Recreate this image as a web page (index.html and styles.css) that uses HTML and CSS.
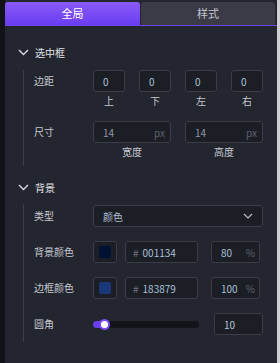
FILE: index.html
```html
<!DOCTYPE html>
<html lang="zh-CN">
<head>
    <meta charset="UTF-8">
    <title>属性面板</title>
    <link rel="stylesheet" href="styles.css">
</head>
<body>
    <div class="edge-left"></div>
    <div class="panel">
        <div class="tabs">
            <div class="tab active">全局</div>
            <div class="tab">样式</div>
        </div>

        <div class="section section-frame">
            <div class="section-head">
                <svg class="chevron" width="11" height="7" viewBox="0 0 11 7"><path d="M1 1l4.5 4.5L10 1" fill="none" stroke="#d8dae2" stroke-width="1.4"/></svg>
                <span>选中框</span>
            </div>
            <div class="section-body first">
                <div class="row row-top">
                    <div class="label">边距</div>
                    <div class="quad">
                        <div class="cell"><div class="box num">0</div><div class="cap">上</div></div>
                        <div class="cell"><div class="box num">0</div><div class="cap">下</div></div>
                        <div class="cell"><div class="box num">0</div><div class="cap">左</div></div>
                        <div class="cell"><div class="box num">0</div><div class="cap">右</div></div>
                    </div>
                </div>
                <div class="row row-top">
                    <div class="label">尺寸</div>
                    <div class="pair">
                        <div class="cell"><div class="box size"><span class="dim">14</span><span class="unit">px</span></div><div class="cap">宽度</div></div>
                        <div class="cell"><div class="box size"><span class="dim">14</span><span class="unit">px</span></div><div class="cap">高度</div></div>
                    </div>
                </div>
            </div>
        </div>

        <div class="section section-bg">
            <div class="section-head">
                <svg class="chevron" width="11" height="7" viewBox="0 0 11 7"><path d="M1 1l4.5 4.5L10 1" fill="none" stroke="#d8dae2" stroke-width="1.4"/></svg>
                <span>背景</span>
            </div>
            <div class="section-body second">
                <div class="row">
                    <div class="label">类型</div>
                    <div class="box select">
                        <span>颜色</span>
                        <svg width="10" height="6" viewBox="0 0 10 6"><path d="M1 1l4 4 4-4" fill="none" stroke="#b8bac4" stroke-width="1.2"/></svg>
                    </div>
                </div>
                <div class="row">
                    <div class="label">背景颜色</div>
                    <div class="color-line">
                        <div class="box swatch"><div class="chip chip-bg"></div></div>
                        <div class="box hex"><span class="hash">#</span><span>001134</span></div>
                        <div class="box pct"><span>80</span><span class="unit">%</span></div>
                    </div>
                </div>
                <div class="row">
                    <div class="label">边框颜色</div>
                    <div class="color-line">
                        <div class="box swatch"><div class="chip chip-border"></div></div>
                        <div class="box hex"><span class="hash">#</span><span>183879</span></div>
                        <div class="box pct"><span>100</span><span class="unit">%</span></div>
                    </div>
                </div>
                <div class="row">
                    <div class="label">圆角</div>
                    <div class="slider-line">
                        <div class="track">
                            <div class="fill" style="width: 11px"></div>
                            <div class="thumb"></div>
                        </div>
                        <div class="box radius">10</div>
                    </div>
                </div>
            </div>
        </div>
    </div>
    <div class="edge-right"></div>
</body>
</html>
```

FILE: styles.css
```css
body {
    margin: 0;
    display: flex;
    width: 280px;
    height: 363px;
    overflow: hidden;
    background: #23252f;
    font-family: "Noto Sans CJK SC", "Noto Sans", sans-serif;
    font-size: 10px;
    color: #c6c8d0;
}
.edge-left {
    width: 5px;
    background: #121318;
}
.edge-right {
    width: 3px;
    background: #cfd0d3;
}
.panel {
    width: 272px;
    background: #23252f;
}
.tabs {
    display: flex;
    gap: 1px;
    margin-top: 2px;
    padding-right: 2px;
    border-bottom: 1px solid #7046f4;
}
.tab {
    flex: 1;
    height: 23px;
    line-height: 23px;
    text-align: center;
    font-size: 11px;
    background: #3a3b47;
    color: #c2c4cc;
    border-radius: 3px 3px 0 0;
}
.tab.active {
    flex: 0 0 135px;
    background: linear-gradient(#8b5cf6, #6a3cf2);
    color: #ffffff;
}
.section-head {
    display: flex;
    align-items: center;
    height: 20px;
    padding-left: 13px;
    color: #e2e4ea;
    font-size: 10px;
}
.section-head span {
    margin-left: 6px;
}
.section-frame .section-head {
    margin-top: 16px;
}
.section-bg .section-head {
    margin-top: 11px;
}
.section-body {
    margin-left: 18px;
    border-left: 1px solid #3b3d48;
    padding-left: 10px;
    display: flex;
    flex-direction: column;
}
.section-body.first {
    margin-top: 8px;
    gap: 14px;
    padding-bottom: 8px;
}
.section-body.second {
    margin-top: 7px;
    gap: 14px;
    padding-bottom: 7px;
    padding-top: 1px;
}
.row {
    display: flex;
    align-items: center;
}
.row-top {
    align-items: flex-start;
}
.label {
    width: 59px;
    flex: none;
    line-height: 22px;
    color: #c6c8d0;
}
.box {
    box-sizing: border-box;
    height: 22px;
    border: 1px solid #3a3c47;
    border-radius: 3px;
    background: #1c1e26;
    display: flex;
    align-items: center;
    color: #a9c0d8;
}
.quad, .pair {
    display: flex;
    gap: 14px;
}
.cell {
    display: flex;
    flex-direction: column;
    align-items: center;
}
.cap {
    margin-top: 3px;
    line-height: 12px;
    color: #c6c8d0;
}
.num {
    width: 32px;
    padding-left: 9px;
}
.size {
    width: 78px;
    padding: 0 5px 0 9px;
    justify-content: space-between;
}
.dim {
    color: #8d99ab;
}
.unit {
    color: #5e616e;
}
.select {
    width: 170px;
    padding: 0 9px 0 9px;
    justify-content: space-between;
    color: #aebfd2;
}
.color-line {
    display: flex;
}
.swatch {
    width: 24px;
    justify-content: center;
}
.chip {
    width: 12px;
    height: 12px;
    border-radius: 2px;
}
.chip-bg {
    background: #001134;
}
.chip-border {
    background: #183879;
}
.hex {
    width: 73px;
    margin-left: 8px;
    padding-left: 7px;
    gap: 4px;
}
.hash {
    color: #6d7080;
}
.pct {
    width: 49px;
    margin-left: 13px;
    padding: 0 4px 0 9px;
    justify-content: space-between;
}
.slider-line {
    display: flex;
    align-items: center;
}
.track {
    position: relative;
    width: 106px;
    height: 7px;
    border-radius: 4px;
    background: #131419;
}
.fill {
    height: 7px;
    border-radius: 4px 0 0 4px;
    background: #6a3cf2;
}
.thumb {
    position: absolute;
    left: 6px;
    top: -2px;
    width: 7px;
    height: 7px;
    border: 2px solid #7b4cf6;
    border-radius: 50%;
    background: #ffffff;
}
.radius {
    width: 49px;
    margin-left: 15px;
    padding-left: 9px;
    color: #b8c3d2;
}
```
